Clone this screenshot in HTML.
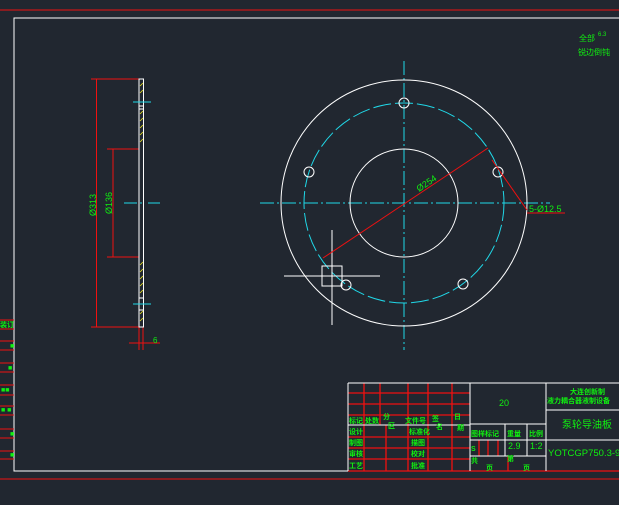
<!DOCTYPE html>
<html><head><meta charset="utf-8"><style>
html,body{margin:0;padding:0;background:#212730;width:619px;height:505px;overflow:hidden}
svg{display:block}
text{font-family:"Liberation Sans","Noto Sans CJK SC",sans-serif;fill:#10f010}
</style></head><body>
<svg width="619" height="505" viewBox="0 0 619 505" xmlns="http://www.w3.org/2000/svg">
<rect width="619" height="505" fill="#212730"/>
<line x1="0" y1="10" x2="619" y2="10" stroke="#f01010" stroke-width="1"/>
<polyline points="619,18 14,18 14,471 348,471" fill="none" stroke="#fff" stroke-width="1"/>
<line x1="0" y1="479" x2="619" y2="479" stroke="#f01010"/>
<g stroke="#f01010">
<line x1="0" y1="320" x2="14" y2="320"/><line x1="0" y1="329" x2="14" y2="329"/>
<line x1="0" y1="341" x2="14" y2="341"/><line x1="0" y1="350" x2="14" y2="350"/>
<line x1="0" y1="363" x2="14" y2="363"/><line x1="0" y1="372" x2="14" y2="372"/>
<line x1="0" y1="385" x2="14" y2="385"/><line x1="0" y1="395" x2="14" y2="395"/>
<line x1="0" y1="406" x2="14" y2="406"/><line x1="0" y1="415" x2="14" y2="415"/>
<line x1="0" y1="429" x2="14" y2="429"/><line x1="0" y1="438" x2="14" y2="438"/>
<line x1="0" y1="451" x2="14" y2="451"/><line x1="0" y1="459" x2="14" y2="459"/>
</g>
<g font-size="7" font-weight="bold"><text x="0" y="327">装订</text><text x="10" y="348">■</text><text x="8" y="370">■</text><text x="1" y="392">■■</text><text x="1" y="412">■ ■</text><text x="10" y="436">■</text><text x="10" y="457">■</text></g>
<text x="579" y="41" font-size="8">全部</text><text x="598" y="36" font-size="6">6.3</text>
<text x="578" y="55" font-size="8">锐边倒钝</text>

<g stroke="#f01010" stroke-width="1" fill="none">
<line x1="91" y1="79" x2="139" y2="79"/><line x1="91" y1="327" x2="139" y2="327"/>
<line x1="96.5" y1="79" x2="96.5" y2="327"/>
<line x1="107" y1="149" x2="139" y2="149"/><line x1="107" y1="257" x2="139" y2="257"/>
<line x1="113" y1="149" x2="113" y2="257"/>
<line x1="139" y1="327" x2="139" y2="350"/><line x1="143" y1="327" x2="143" y2="350"/>
<line x1="129" y1="343" x2="160" y2="343"/>
</g>
<rect x="139" y="79" width="4.5" height="248" fill="none" stroke="#fff" stroke-width="1"/>
<g stroke="#e8e020" stroke-width="0.8">
<path d="M140,86l3,-3M140,93l3,-3M140,114l3,-3M140,121l3,-3M140,128l3,-3M140,135l3,-3M140,142l3,-3M140,265l3,-3M140,272l3,-3M140,279l3,-3M140,286l3,-3M140,293l3,-3M140,314l3,-3M140,321l3,-3"/>
</g>
<line x1="139" y1="106" x2="143.5" y2="106" stroke="#fff"/><line x1="139" y1="109" x2="143.5" y2="109" stroke="#fff"/>
<line x1="139" y1="298" x2="143.5" y2="298" stroke="#fff"/><line x1="139" y1="310" x2="143.5" y2="310" stroke="#fff"/>
<g stroke="#20d8e8"><line x1="133" y1="102" x2="151" y2="102"/><line x1="133" y1="304" x2="151" y2="304"/>
<line x1="124" y1="203" x2="137" y2="203"/><line x1="140" y1="203" x2="142" y2="203"/><line x1="148" y1="203" x2="160" y2="203"/></g>
<text transform="translate(96,216) rotate(-90)" font-size="9">Ø313</text>
<text transform="translate(112,214) rotate(-90)" font-size="9">Ø136</text>
<text x="153" y="343" font-size="8">6</text>

<g fill="none" stroke="#20d8e8" stroke-width="1">
<line x1="404" y1="61" x2="404" y2="350" stroke-dasharray="14,3,2,3"/>
<line x1="260" y1="203" x2="550" y2="203" stroke-dasharray="14,3,2,3"/>
<circle cx="404" cy="203" r="100" stroke-dasharray="18,4"/>
</g>
<g fill="none" stroke="#fff" stroke-width="1">
<circle cx="404" cy="203" r="123"/>
<circle cx="404" cy="203" r="54"/>
<circle cx="404" cy="103" r="5"/><circle cx="309" cy="172" r="5"/><circle cx="498" cy="172" r="5"/>
<circle cx="346" cy="285" r="5"/><circle cx="463" cy="284" r="5"/>
<line x1="332" y1="230" x2="332" y2="325"/><line x1="284" y1="276" x2="380" y2="276"/>
<rect x="322" y="266" width="20" height="20"/>
</g>
<g stroke="#f01010" stroke-width="1">
<line x1="323" y1="258" x2="488" y2="148"/>
<line x1="492" y1="160" x2="527" y2="210"/>
<line x1="527" y1="213" x2="565" y2="213"/>
</g>
<text transform="translate(419,192) rotate(-34)" font-size="9">Ø254</text>
<text x="529" y="212" font-size="9">5-Ø12.5</text>

<g stroke="#f01010" stroke-width="1.3" fill="none">
<line x1="364" y1="383" x2="364" y2="471"/><line x1="380" y1="383" x2="380" y2="425"/>
<line x1="408" y1="383" x2="408" y2="471"/><line x1="428" y1="383" x2="428" y2="471"/>
<line x1="452" y1="383" x2="452" y2="471"/><line x1="386" y1="425" x2="386" y2="471"/>
<line x1="348" y1="393" x2="470" y2="393"/><line x1="348" y1="404" x2="470" y2="404"/>
<line x1="348" y1="415" x2="470" y2="415"/>
<line x1="348" y1="437" x2="470" y2="437"/><line x1="348" y1="448" x2="470" y2="448"/>
<line x1="348" y1="459" x2="470" y2="459"/>
<line x1="479" y1="440" x2="479" y2="456"/><line x1="488" y1="440" x2="488" y2="456"/><line x1="498" y1="440" x2="498" y2="456"/>
<line x1="508" y1="456" x2="508" y2="471"/>
<line x1="348" y1="471" x2="619" y2="471"/>
</g>
<g stroke="#fff" stroke-width="1" fill="none">
<line x1="348" y1="383" x2="619" y2="383"/><line x1="348" y1="383" x2="348" y2="471"/>
<line x1="348" y1="425" x2="470" y2="425"/>
<line x1="470" y1="383" x2="470" y2="471"/><line x1="546" y1="383" x2="546" y2="471"/>
<line x1="470" y1="424" x2="546" y2="424"/><line x1="470" y1="440" x2="619" y2="440"/>
<line x1="470" y1="456" x2="546" y2="456"/>
<line x1="505" y1="424" x2="505" y2="456"/><line x1="527" y1="424" x2="527" y2="456"/>
<line x1="546" y1="410" x2="619" y2="410"/>
</g>
<g font-size="7" font-weight="bold">
<text x="349" y="423">标记</text><text x="365" y="423">处数</text><text x="383" y="419">分</text><text x="388" y="428">区</text>
<text x="405" y="423">文件号</text><text x="432" y="421">签</text><text x="436" y="429">名</text><text x="454" y="419">日</text><text x="457" y="430">期</text>
<text x="349" y="434">设计</text><text x="409" y="434">标准化</text>
<text x="349" y="445">制图</text><text x="411" y="445">描图</text>
<text x="349" y="456">审核</text><text x="411" y="456">校对</text>
<text x="349" y="468">工艺</text><text x="411" y="468">批准</text>
<text x="471" y="436">图样标记</text><text x="507" y="436">重量</text><text x="529" y="436">比例</text>
<text x="471" y="451">S</text><text x="471" y="463">共</text><text x="507" y="461">第</text>
<text x="486" y="470">页</text><text x="523" y="470">页</text>
<text x="570" y="394">大连创新制</text>
<text x="547" y="403">液力耦合器液制设备</text>
</g>
<text x="499" y="406" font-size="9">20</text>
<text x="508" y="449" font-size="9">2.9</text><text x="530" y="449" font-size="9">1:2</text>
<text x="562" y="428" font-size="10">泵轮导油板</text>
<text x="548" y="456" font-size="9.5">YOTCGP750.3-9</text>
</svg>
</body></html>
